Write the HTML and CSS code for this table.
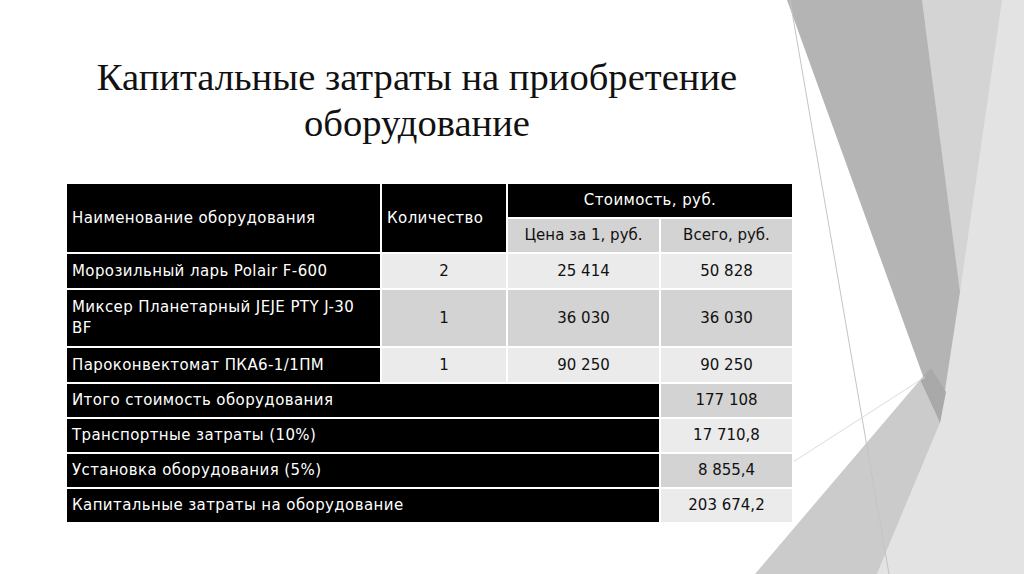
FILE: index.html
```html
<!DOCTYPE html>
<html lang="ru">
<head>
<meta charset="utf-8">
<title>Капитальные затраты</title>
<link rel="stylesheet" href="styles.css">
</head>
<body>
<div class="slide">
  <svg class="deco" viewBox="0 0 1024 574" preserveAspectRatio="none" aria-hidden="true">
    <polygon points="922,0 1024,0 1024,574 877,574 940,423" fill="#e3e3e3"/>
    <polygon points="922,0 1002,0 960,292" fill="#d4d4d4"/>
    <polygon points="755,574 920,380 940,423 877,574" fill="#cbcbcb"/>
    <polygon points="787,0 922,0 960,292 940,423" fill="#b4b4b4"/>
    <polygon points="920,380 931,368 946,392 940,423" fill="#a9a9a9"/>
    <line x1="790" y1="0" x2="889" y2="574" stroke="#c4c4c4" stroke-width="1"/>
    <line x1="793" y1="462" x2="925" y2="377" stroke="#dcdcdc" stroke-width="1"/>
  </svg>
  <div class="content">
    <h1 class="title">Капитальные затраты на приобретение<br>оборудование</h1>
    <table class="costs">
      <colgroup>
        <col class="c1"><col class="c2"><col class="c3"><col class="c4">
      </colgroup>
      <tr class="h1row">
        <td class="dark left" rowspan="2">Наименование оборудования</td>
        <td class="dark left" rowspan="2">Количество</td>
        <td class="dark center" colspan="2">Стоимость, руб.</td>
      </tr>
      <tr class="h2row">
        <td class="mid center">Цена за 1, руб.</td>
        <td class="mid center">Всего, руб.</td>
      </tr>
      <tr class="row">
        <td class="dark left">Морозильный ларь Polair F-600</td>
        <td class="light center">2</td>
        <td class="light center">25 414</td>
        <td class="light center">50 828</td>
      </tr>
      <tr class="row tall">
        <td class="dark left">Миксер Планетарный JEJE PTY J-30 BF</td>
        <td class="mid center">1</td>
        <td class="mid center">36 030</td>
        <td class="mid center">36 030</td>
      </tr>
      <tr class="row">
        <td class="dark left">Пароконвектомат ПКА6-1/1ПМ</td>
        <td class="light center">1</td>
        <td class="light center">90 250</td>
        <td class="light center">90 250</td>
      </tr>
      <tr class="trow">
        <td class="dark left" colspan="3">Итого стоимость оборудования</td>
        <td class="mid center">177 108</td>
      </tr>
      <tr class="trow">
        <td class="dark left" colspan="3">Транспортные затраты (10%)</td>
        <td class="light center">17 710,8</td>
      </tr>
      <tr class="trow">
        <td class="dark left" colspan="3">Установка оборудования (5%)</td>
        <td class="mid center">8 855,4</td>
      </tr>
      <tr class="trow">
        <td class="dark left" colspan="3">Капитальные затраты на оборудование</td>
        <td class="light center">203 674,2</td>
      </tr>
    </table>
  </div>
</div>
</body>
</html>
```
FILE: styles.css
```css
html, body {
  margin: 0;
  padding: 0;
  background: #ffffff;
}
.slide {
  position: relative;
  width: 1024px;
  height: 574px;
  overflow: hidden;
  background: #ffffff;
}
.deco {
  position: absolute;
  left: 0;
  top: 0;
  width: 1024px;
  height: 574px;
}
.content {
  position: relative;
  padding-top: 54px;
  padding-left: 65px;
}
.title {
  margin: 0;
  width: 704px;
  text-align: center;
  font-family: "Liberation Serif", "Times New Roman", serif;
  font-weight: normal;
  font-size: 38.6px;
  line-height: 46px;
  color: #111111;
}
.costs {
  margin-top: 36px;
  table-layout: fixed;
  width: 729px;
  border-collapse: separate;
  border-spacing: 2px;
  background: #ffffff;
  font-family: "DejaVu Sans", Verdana, sans-serif;
  font-size: 15px;
}
.c1 { width: 313px; }
.c2 { width: 124px; }
.c3 { width: 151px; }
.c4 { width: 131px; }
.costs td {
  padding: 0 5px;
  line-height: 21px;
  vertical-align: middle;
}
.h1row td { height: 33px; }
.h2row td { height: 33px; }
.row td { height: 34px; }
.row.tall td { height: 56px; }
.trow td { height: 33px; }
.dark {
  background: #000000;
  color: #ffffff;
  letter-spacing: 0.4px;
}
.light {
  background: #ebebeb;
  color: #111111;
}
.mid {
  background: #d3d3d3;
  color: #111111;
}
.left { text-align: left; }
.center { text-align: center; }
```
